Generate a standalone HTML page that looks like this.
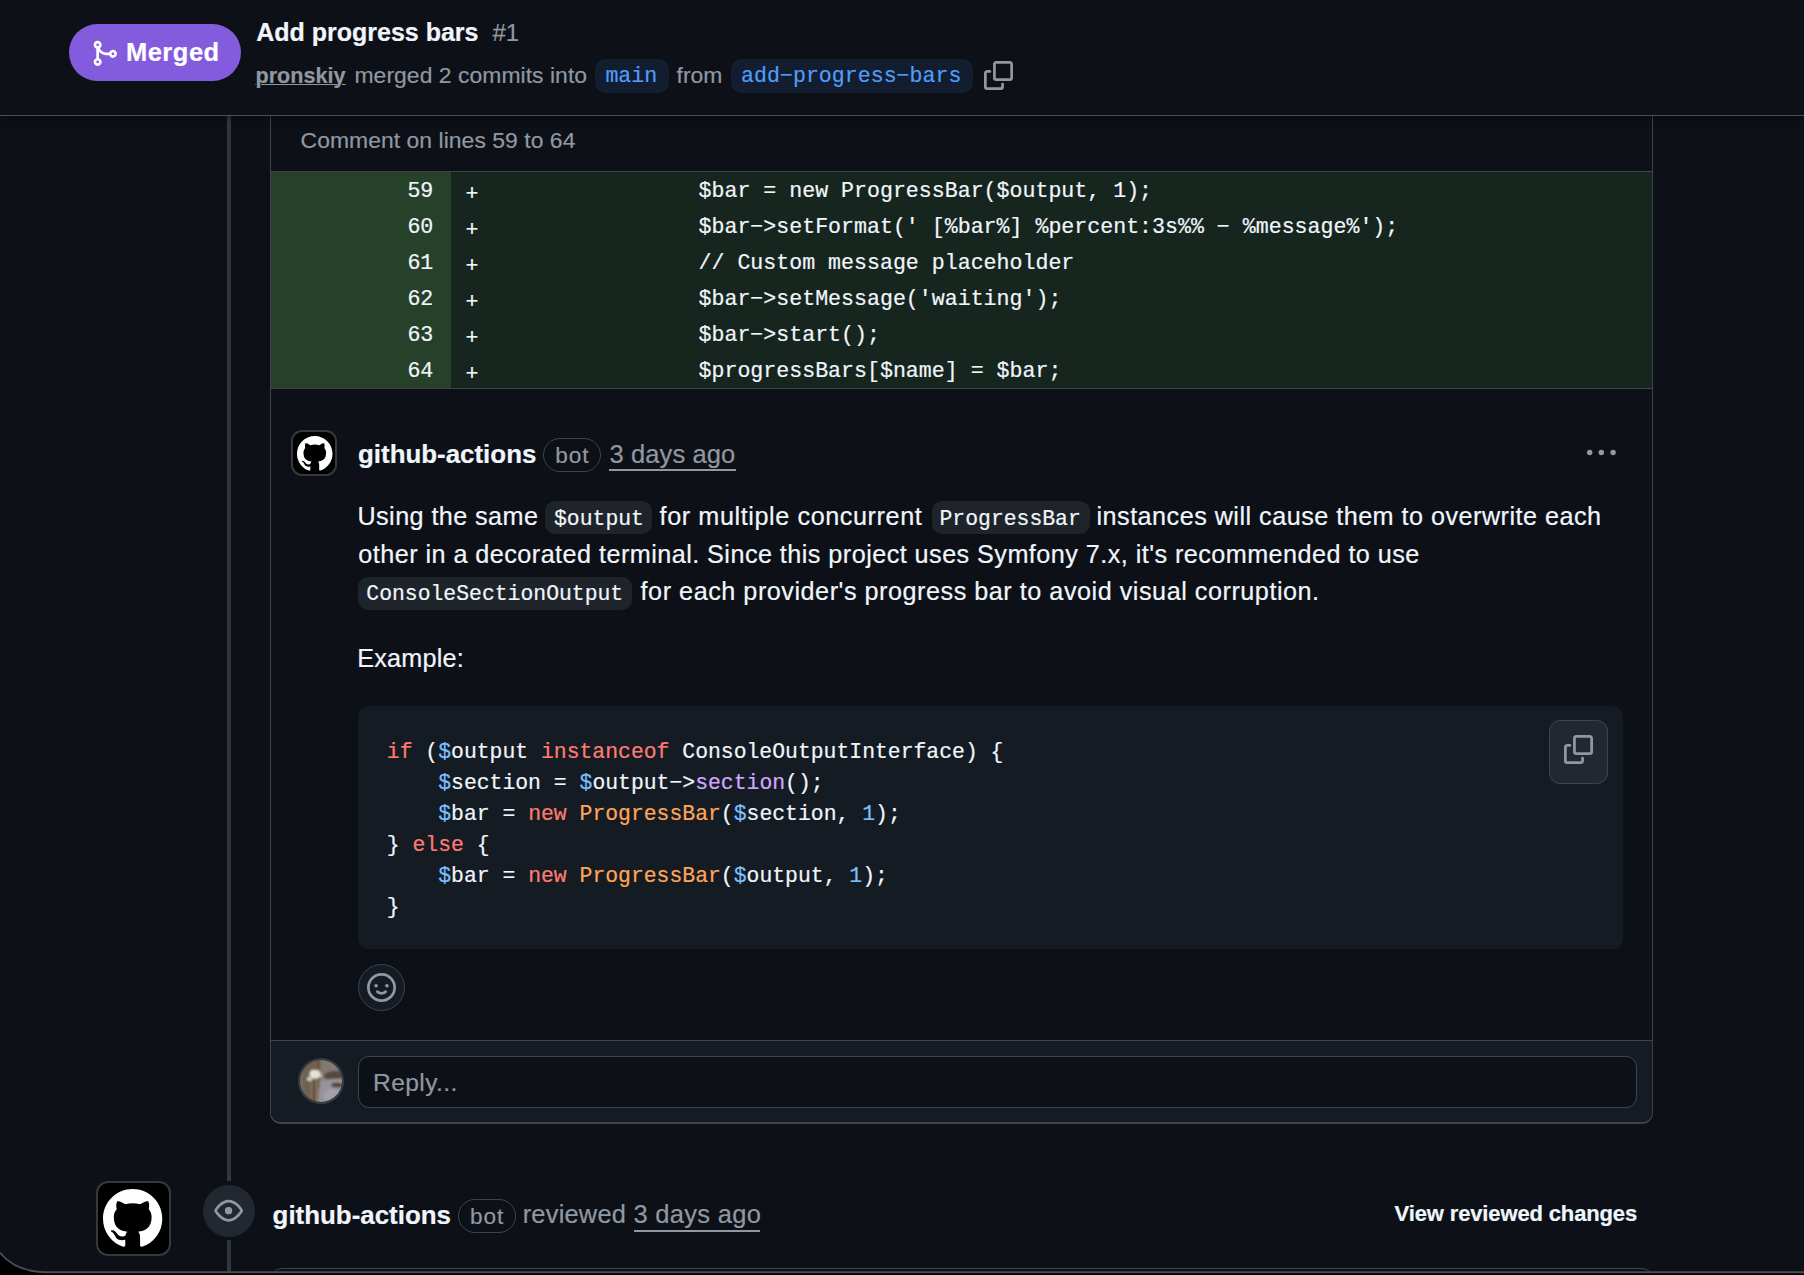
<!DOCTYPE html>
<html><head><meta charset="utf-8">
<style>
*{margin:0;padding:0;box-sizing:border-box}
html,body{width:1804px;height:1275px;overflow:hidden;background:#0d1117}
body{position:relative;font-family:"Liberation Sans",sans-serif;color:#f0f6fc;-webkit-text-stroke-width:0.2px}
.a{position:absolute;white-space:pre}
.s{font-family:"Liberation Sans",sans-serif}
.m{font-family:"Liberation Mono",monospace}
.mu{color:#9198a1}
.b{font-weight:bold}
svg{position:absolute;display:block;overflow:visible}
.t252{font-size:25.2px;line-height:25.2px}
.pill{position:absolute;background:#1f242b;border-radius:10px}
.ln{position:absolute;left:271px;width:180px;height:36px;background:#274029}
.lc{position:absolute;left:451px;width:1201px;height:36px;background:#17251f}
.num{position:absolute;width:433.3px;margin-top:0.6px;left:0;text-align:right;font:21.6px/21.6px "Liberation Mono",monospace;color:#f0f6fc}
.plus{position:absolute;left:465.4px;margin-top:3.5px;font:21.6px/21.6px "Liberation Mono",monospace;white-space:pre}
.dc{position:absolute;left:698.5px;margin-top:1px;font:21.6px/21.6px "Liberation Mono",monospace;white-space:pre}
.cl{position:absolute;left:386.8px;font:21.42px/21.42px "Liberation Mono",monospace;white-space:pre;color:#f0f6fc}
.k{color:#ff7b72}.c1{color:#79c0ff}.en{color:#d2a8ff}.v{color:#ffa657}
</style></head><body>

<!-- timeline line -->
<div class="a" style="left:227px;top:110px;width:4px;height:1071px;background:#30363d"></div>
<div class="a" style="left:227px;top:1240px;width:4px;height:35px;background:#30363d"></div>

<!-- comment box -->
<div class="a" style="left:270px;top:-30px;width:1383px;height:1154px;border:1px solid #3d444d;border-bottom-width:2px;border-top:none;border-radius:0 0 11px 11px;background:#0d1117;overflow:hidden">
  <div style="position:absolute;left:0;top:1070px;width:1381px;height:90px;background:#151b23;border-top:1px solid #3d444d"></div>
</div>

<!-- Comment on lines -->
<div class="a mu" style="left:300.6px;top:128.5px;font-size:22.9px;line-height:22.9px;letter-spacing:0.05px">Comment on lines 59 to 64</div>

<!-- diff -->
<div class="a" style="left:271px;top:171px;width:1381px;height:1px;background:#3d444d"></div>
<div class="a" style="left:271px;top:388px;width:1381px;height:1px;background:#3d444d"></div>
<div class="ln" style="top:172px"></div><div class="lc" style="top:172px"></div>
<div class="ln" style="top:208px"></div><div class="lc" style="top:208px"></div>
<div class="ln" style="top:244px"></div><div class="lc" style="top:244px"></div>
<div class="ln" style="top:280px"></div><div class="lc" style="top:280px"></div>
<div class="ln" style="top:316px"></div><div class="lc" style="top:316px"></div>
<div class="ln" style="top:352px"></div><div class="lc" style="top:352px"></div>

<div class="num" style="top:180.4px">59</div><div class="plus" style="top:180.4px">+</div><div class="dc" style="top:180.4px">$bar = new ProgressBar($output, 1);</div>
<div class="num" style="top:216.4px">60</div><div class="plus" style="top:216.4px">+</div><div class="dc" style="top:216.4px">$bar&#8722;&gt;setFormat(' [%bar%] %percent:3s%% &#8722; %message%');</div>
<div class="num" style="top:252.4px">61</div><div class="plus" style="top:252.4px">+</div><div class="dc" style="top:252.4px">// Custom message placeholder</div>
<div class="num" style="top:288.4px">62</div><div class="plus" style="top:288.4px">+</div><div class="dc" style="top:288.4px">$bar&#8722;&gt;setMessage('waiting');</div>
<div class="num" style="top:324.4px">63</div><div class="plus" style="top:324.4px">+</div><div class="dc" style="top:324.4px">$bar&#8722;&gt;start();</div>
<div class="num" style="top:360.4px">64</div><div class="plus" style="top:360.4px">+</div><div class="dc" style="top:360.4px">$progressBars[$name] = $bar;</div>

<!-- comment header -->
<div class="a" style="left:291.3px;top:430.2px;width:46px;height:46.3px;border-radius:11px;background:#000;border:2px solid #33393f"></div>
<svg style="left:296.8px;top:436px" width="35.5" height="35.5" viewBox="0 0 16 16"><path fill="#fff" d="M8 0c4.42 0 8 3.58 8 8a8.013 8.013 0 0 1-5.45 7.59c-.4.08-.55-.17-.55-.38 0-.27.01-1.13.01-2.2 0-.75-.25-1.23-.54-1.48 1.78-.2 3.65-.88 3.65-3.95 0-.88-.31-1.59-.82-2.15.08-.2.36-1.02-.08-2.12 0 0-.67-.22-2.2.82-.64-.18-1.32-.27-2-.27-.68 0-1.36.09-2 .27-1.53-1.03-2.2-.82-2.2-.82-.44 1.1-.16 1.92-.08 2.12-.51.56-.82 1.28-.82 2.15 0 3.06 1.86 3.75 3.64 3.95-.23.2-.44.55-.51 1.07-.46.21-1.61.55-2.33-.66-.15-.24-.6-.83-1.23-.82-.67.01-.27.38.01.53.34.19.73.9.82 1.13.16.45.68 1.31 2.69.94 0 .67.01 1.3.01 1.49 0 .21-.15.45-.55.38A7.995 7.995 0 0 1 0 8c0-4.42 3.58-8 8-8Z"/></svg>
<div class="a b" style="left:358px;top:441.6px;font-size:25.9px;line-height:25.9px">github-actions</div>
<div class="a" style="left:543px;top:438px;width:58px;height:34px;border:1px solid #3d444d;border-radius:17px"></div>
<div class="a mu" style="left:555.2px;top:444.9px;font-size:22.6px;line-height:22.6px;letter-spacing:1.0px">bot</div>
<div class="a mu" style="left:609.5px;top:442.2px;font-size:25.5px;line-height:25.5px;letter-spacing:0.11px">3 days ago</div>
<div class="a" style="left:609px;top:469px;width:126.5px;height:2px;background:#9198a1"></div>
<svg style="left:1586px;top:449px" width="31" height="7" viewBox="0 0 31 7"><circle cx="3.7" cy="3.5" r="2.75" fill="#9198a1"/><circle cx="15.3" cy="3.5" r="2.75" fill="#9198a1"/><circle cx="27.1" cy="3.5" r="2.75" fill="#9198a1"/></svg>

<!-- paragraph -->
<div class="a t252" style="left:357.5px;top:503.6px;letter-spacing:0.42px">Using the same</div>
<div class="pill" style="left:545px;top:500.8px;width:106.7px;height:33px"></div>
<div class="a m" style="left:554px;top:508.7px;font-size:21.42px;line-height:21.42px">$output</div>
<div class="a t252" style="left:659.6px;top:503.6px;letter-spacing:0.59px">for multiple concurrent</div>
<div class="pill" style="left:931.6px;top:500.8px;width:158px;height:33px"></div>
<div class="a m" style="left:939.5px;top:508.7px;font-size:21.42px;line-height:21.42px">ProgressBar</div>
<div class="a t252" style="left:1096.5px;top:503.6px;letter-spacing:0.48px">instances will cause them to overwrite each</div>
<div class="a t252" style="left:358.3px;top:541.6px;letter-spacing:0.458px">other in a decorated terminal. Since this project uses Symfony 7.x, it's recommended to use</div>
<div class="pill" style="left:358px;top:576.5px;width:274.2px;height:33px"></div>
<div class="a m" style="left:366.3px;top:583.7px;font-size:21.42px;line-height:21.42px">ConsoleSectionOutput</div>
<div class="a t252" style="left:640.6px;top:578.6px;letter-spacing:0.527px">for each provider's progress bar to avoid visual corruption.</div>
<div class="a t252" style="left:357.2px;top:645.6px;letter-spacing:0.24px">Example:</div>

<!-- code block -->
<div class="a" style="left:358px;top:706px;width:1265px;height:243px;border-radius:11px;background:#151b23"></div>
<div class="cl" style="top:741.6px"><span class="k">if</span> (<span class="c1">$</span>output <span class="k">instanceof</span> ConsoleOutputInterface) {</div>
<div class="cl" style="top:772.7px">    <span class="c1">$</span>section = <span class="c1">$</span>output&#8722;&gt;<span class="en">section</span>();</div>
<div class="cl" style="top:803.7px">    <span class="c1">$</span>bar = <span class="k">new</span> <span class="v">ProgressBar</span>(<span class="c1">$</span>section, <span class="c1">1</span>);</div>
<div class="cl" style="top:834.8px">} <span class="k">else</span> {</div>
<div class="cl" style="top:865.8px">    <span class="c1">$</span>bar = <span class="k">new</span> <span class="v">ProgressBar</span>(<span class="c1">$</span>output, <span class="c1">1</span>);</div>
<div class="cl" style="top:896.9px">}</div>
<div class="a" style="left:1549px;top:720px;width:59px;height:64px;border-radius:11px;background:#212830;border:1px solid #3d444d"></div>
<svg style="left:1564px;top:735px" width="29" height="29" viewBox="0 0 16 16"><path fill="#9198a1" d="M0 6.75C0 5.784.784 5 1.75 5h1.5a.75.75 0 0 1 0 1.5h-1.5a.25.25 0 0 0-.25.25v7.5c0 .138.112.25.25.25h7.5a.25.25 0 0 0 .25-.25v-1.5a.75.75 0 0 1 1.5 0v1.5A1.75 1.75 0 0 1 9.25 16h-7.5A1.75 1.75 0 0 1 0 14.25Z"/><path fill="#9198a1" d="M5 1.75C5 .784 5.784 0 6.75 0h7.5C15.216 0 16 .784 16 1.75v7.5A1.75 1.75 0 0 1 14.25 11h-7.5A1.75 1.75 0 0 1 5 9.25Zm1.75-.25a.25.25 0 0 0-.25.25v7.5c0 .138.112.25.25.25h7.5a.25.25 0 0 0 .25-.25v-7.5a.25.25 0 0 0-.25-.25Z"/></svg>

<!-- emoji button -->
<div class="a" style="left:358px;top:964px;width:47px;height:47px;border-radius:50%;background:#151b23;border:1px solid #3d444d"></div>
<svg style="left:367px;top:973px" width="29" height="29" viewBox="0 0 16 16"><path fill="#9198a1" d="M8 0a8 8 0 1 1 0 16A8 8 0 0 1 8 0ZM1.5 8a6.5 6.5 0 1 0 13 0 6.5 6.5 0 0 0-13 0Zm3.82 1.636a.75.75 0 0 1 1.038.175l.007.009c.103.118.22.222.35.31.264.178.683.37 1.285.37.602 0 1.02-.192 1.285-.371.13-.088.247-.192.35-.31l.007-.008a.75.75 0 0 1 1.222.87l-.614-.43.614.43-.001.002-.002.002-.004.006-.011.016a3.32 3.32 0 0 1-.724.664c-.474.32-1.18.63-2.127.63-.946 0-1.652-.31-2.126-.63a3.331 3.331 0 0 1-.725-.664l-.011-.016-.004-.006-.002-.002v-.001a.75.75 0 0 1 .183-1.044ZM12 7a1 1 0 1 1-2 0 1 1 0 0 1 2 0ZM5 8a1 1 0 1 1 0-2 1 1 0 0 1 0 2Z"/></svg>

<!-- reply -->
<svg style="left:298.2px;top:1058.2px" width="46" height="46" viewBox="0 0 46 46">
<defs><clipPath id="avc"><circle cx="23" cy="23" r="22.6"/></clipPath><filter id="bl" x="-10%" y="-10%" width="120%" height="120%"><feGaussianBlur stdDeviation="0.9"/></filter></defs>
<g clip-path="url(#avc)"><g filter="url(#bl)">
<rect x="-2" y="-2" width="50" height="50" fill="#80766c"/>
<rect x="-2" y="-2" width="22" height="50" fill="#6e6053"/>
<rect x="22" y="-2" width="26" height="20" fill="#82796f"/>
<ellipse cx="37" cy="18" rx="11" ry="5" fill="#594a3b"/>
<path d="M22 22 L48 20 L48 48 L20 48 Z" fill="#97939a"/>
<ellipse cx="34" cy="37" rx="9" ry="6" fill="#a4a0aa"/>
<ellipse cx="39" cy="27" rx="6" ry="2.5" fill="#4f4438"/>
<rect x="13" y="20" width="7" height="28" fill="#85735c"/>
<rect x="15" y="22" width="2" height="26" fill="#4e3a2c"/>
<line x1="21" y1="0" x2="21" y2="15" stroke="#3b2e24" stroke-width="1.2"/>
<line x1="22" y1="16" x2="20" y2="30" stroke="#4b3e34" stroke-width="1"/>
<ellipse cx="17" cy="16" rx="5.5" ry="4.5" fill="#e6e5dc"/>
<ellipse cx="11.5" cy="21" rx="2.6" ry="2" fill="#ddd6c8"/>
<ellipse cx="22" cy="18" rx="2" ry="1.4" fill="#d8d2c6"/>
<circle cx="17.5" cy="9.8" r="2.6" fill="#8a5c3c"/>
<rect x="-2" y="14" width="7" height="34" fill="#776a5e"/>
</g></g>
<circle cx="23" cy="23" r="22" fill="none" stroke="#33393f" stroke-width="2"/>
</svg>
<div class="a" style="left:358px;top:1056px;width:1279px;height:51.5px;border-radius:11px;background:#0d1117;border:1px solid #3d444d"></div>
<div class="a mu" style="left:373px;top:1070.7px;font-size:24.6px;line-height:24.6px;letter-spacing:0.39px">Reply...</div>

<!-- bottom timeline item -->
<div class="a" style="left:96px;top:1180.5px;width:74.5px;height:75px;border-radius:12px;background:#000;border:2px solid #33393f"></div>
<svg style="left:103.3px;top:1189px" width="59.3" height="59.3" viewBox="0 0 16 16"><path fill="#fff" d="M8 0c4.42 0 8 3.58 8 8a8.013 8.013 0 0 1-5.45 7.59c-.4.08-.55-.17-.55-.38 0-.27.01-1.13.01-2.2 0-.75-.25-1.23-.54-1.48 1.78-.2 3.65-.88 3.65-3.95 0-.88-.31-1.59-.82-2.15.08-.2.36-1.02-.08-2.12 0 0-.67-.22-2.2.82-.64-.18-1.32-.27-2-.27-.68 0-1.36.09-2 .27-1.53-1.03-2.2-.82-2.2-.82-.44 1.1-.16 1.92-.08 2.12-.51.56-.82 1.28-.82 2.15 0 3.06 1.86 3.75 3.64 3.95-.23.2-.44.55-.51 1.07-.46.21-1.61.55-2.33-.66-.15-.24-.6-.83-1.23-.82-.67.01-.27.38.01.53.34.19.73.9.82 1.13.16.45.68 1.31 2.69.94 0 .67.01 1.3.01 1.49 0 .21-.15.45-.55.38A7.995 7.995 0 0 1 0 8c0-4.42 3.58-8 8-8Z"/></svg>
<div class="a" style="left:203px;top:1185px;width:52px;height:52px;border-radius:50%;background:#212830"></div>
<svg style="left:213.5px;top:1195.6px" width="29.3" height="29.3" viewBox="0 0 16 16"><path fill="#9198a1" d="M8 2c1.981 0 3.671.992 4.933 2.078 1.27 1.091 2.187 2.345 2.637 3.023a1.62 1.62 0 0 1 0 1.798c-.45.678-1.367 1.932-2.637 3.023C11.67 13.008 9.981 14 8 14c-1.981 0-3.671-.992-4.933-2.078C1.797 10.83.88 9.576.43 8.898a1.62 1.62 0 0 1 0-1.798c.45-.677 1.367-1.931 2.637-3.022C4.33 2.992 6.019 2 8 2ZM1.679 7.932a.12.12 0 0 0 0 .136c.411.622 1.241 1.75 2.366 2.717C5.176 11.758 6.527 12.5 8 12.5c1.473 0 2.825-.742 3.955-1.715 1.124-.967 1.954-2.096 2.366-2.717a.12.12 0 0 0 0-.136c-.412-.621-1.242-1.75-2.366-2.717C10.824 4.242 9.473 3.5 8 3.5c-1.473 0-2.825.742-3.955 1.715-1.124.967-1.954 2.096-2.366 2.717ZM8 10a2 2 0 1 1-.001-3.999A2 2 0 0 1 8 10Z"/></svg>
<div class="a b" style="left:272.6px;top:1202.6px;font-size:25.9px;line-height:25.9px">github-actions</div>
<div class="a" style="left:458px;top:1199px;width:58px;height:34px;border:1px solid #3d444d;border-radius:17px"></div>
<div class="a mu" style="left:469.9px;top:1205.7px;font-size:22.6px;line-height:22.6px;letter-spacing:1.0px">bot</div>
<div class="a mu" style="left:522.7px;top:1202px;font-size:25.4px;line-height:25.4px;letter-spacing:0.23px">reviewed</div>
<div class="a mu" style="left:633.4px;top:1202px;font-size:25.5px;line-height:25.5px;letter-spacing:0.3px">3 days ago</div>
<div class="a" style="left:634px;top:1230px;width:126px;height:2px;background:#9198a1"></div>
<div class="a b" style="left:1394.6px;top:1203.3px;font-size:22px;line-height:22px;letter-spacing:-0.14px">View reviewed changes</div>

<!-- next box top edge -->
<div class="a" style="left:271px;top:1268px;width:1382px;height:20px;border:1px solid #3d444d;border-radius:11px 11px 0 0"></div>

<!-- window frame bottom -->
<svg style="left:0;top:1240px" width="1804" height="35" viewBox="0 0 1804 35"><path d="M0 12.5 C10 25.5 25 32.2 48 32.2 L1804 32.2 L1804 35 L0 35Z" fill="#000"/><path d="M0 12.5 C10 25.5 25 32.2 48 32.2 L1804 32.2" stroke="#4a4e54" stroke-width="2" fill="none"/></svg>

<!-- header -->
<div class="a" style="left:0;top:0;width:1804px;height:116px;background:#0d1117;box-shadow:0 1px 6px rgba(0,0,0,0.55)"></div>
<div class="a" style="left:0;top:115px;width:1804px;height:1px;background:#4a5059"></div>
<div class="a" style="left:69px;top:24px;width:172px;height:57px;border-radius:28.5px;background:#835bdd"></div>
<svg style="left:89.6px;top:38.5px" width="28.8" height="28.8" viewBox="0 0 16 16"><path fill="#fff" d="M5.45 5.154A4.25 4.25 0 0 0 9.25 7.5h1.378a2.251 2.251 0 1 1 0 1.5H9.25A5.734 5.734 0 0 1 5 7.123v3.505a2.25 2.25 0 1 1-1.5 0V5.372a2.25 2.25 0 1 1 1.95-.218ZM4.25 13.5a.75.75 0 1 0 0-1.5.75.75 0 0 0 0 1.5Zm8.5-4.5a.75.75 0 1 0 0-1.5.75.75 0 0 0 0 1.5ZM5 3.25a.75.75 0 1 0-1.5 0 .75.75 0 0 0 1.5 0Z"/></svg>
<div class="a b" style="left:125.9px;top:40.3px;font-size:25.5px;line-height:25.5px;color:#fff;letter-spacing:0.52px">Merged</div>
<div class="a b" style="left:256.2px;top:19.75px;font-size:25px;line-height:25px">Add progress bars</div>
<div class="a mu" style="left:492.4px;top:20.6px;font-size:24px;line-height:24px">#1</div>
<div class="a b mu" style="left:255.5px;top:64.6px;font-size:21.6px;line-height:21.6px;text-decoration:underline;text-decoration-thickness:1.4px;text-underline-offset:1.4px">pronskiy</div>
<div class="a mu" style="left:354.5px;top:63.5px;font-size:22.9px;line-height:22.9px;letter-spacing:0.05px">merged 2 commits into</div>
<div class="pill" style="left:595px;top:59px;width:74px;height:34px;background:#121d2f"></div>
<div class="a m" style="left:605.4px;top:65.6px;font-size:21.6px;line-height:21.6px;color:#519cf8">main</div>
<div class="a mu" style="left:676.6px;top:63.5px;font-size:22.9px;line-height:22.9px">from</div>
<div class="pill" style="left:731px;top:59px;width:242px;height:34px;background:#121d2f"></div>
<div class="a m" style="left:741.1px;top:65.6px;font-size:21.6px;line-height:21.6px;color:#519cf8">add&#8722;progress&#8722;bars</div>
<svg style="left:984px;top:61px" width="29" height="29" viewBox="0 0 16 16"><path fill="#9198a1" d="M0 6.75C0 5.784.784 5 1.75 5h1.5a.75.75 0 0 1 0 1.5h-1.5a.25.25 0 0 0-.25.25v7.5c0 .138.112.25.25.25h7.5a.25.25 0 0 0 .25-.25v-1.5a.75.75 0 0 1 1.5 0v1.5A1.75 1.75 0 0 1 9.25 16h-7.5A1.75 1.75 0 0 1 0 14.25Z"/><path fill="#9198a1" d="M5 1.75C5 .784 5.784 0 6.75 0h7.5C15.216 0 16 .784 16 1.75v7.5A1.75 1.75 0 0 1 14.25 11h-7.5A1.75 1.75 0 0 1 5 9.25Zm1.75-.25a.25.25 0 0 0-.25.25v7.5c0 .138.112.25.25.25h7.5a.25.25 0 0 0 .25-.25v-7.5a.25.25 0 0 0-.25-.25Z"/></svg>

</body></html>
